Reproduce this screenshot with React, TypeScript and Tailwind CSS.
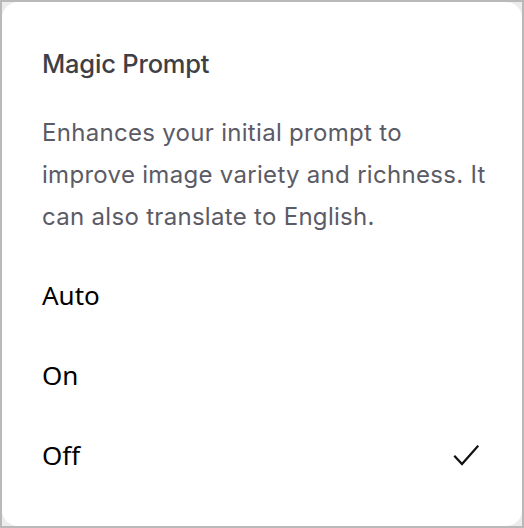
const options = ['Auto', 'On', 'Off'];

const CheckMark = () => (
  <svg width="26" height="23" viewBox="0 0 26 23" fill="none" className="mr-[11px]">
    <polyline points="2,12.5 9,20 24.5,2.5" stroke="#111" strokeWidth="2.2" strokeLinecap="square" strokeLinejoin="miter" />
  </svg>
);

export default function App() {
  const selected = 'Off';
  return (
    <div className="w-[524px] h-[528px] border-2 border-[#b9b9b9] bg-[#ececec]">
      <div className="h-full w-full rounded-[16px] bg-white pl-[40px] pr-[32px] pt-[45px]" style={{ fontFamily: 'Inter, sans-serif' }}>
        <h1 className="text-[25.5px] leading-[34px] font-medium text-[#3f3f46] tracking-[-0.2px]">Magic Prompt</h1>
        <p className="mt-[31px] text-[24px] leading-[42px] text-[#5b5b66] tracking-[0.3px]">
          Enhances your initial prompt to improve image variety and richness. It can also translate to English.
        </p>
        <ul className="mt-[17px]" style={{ fontFamily: '"Noto Sans", sans-serif' }}>
          {options.map((o) => (
            <li key={o} className="flex h-[80px] items-center justify-between text-[26px] text-black">
              <span>{o}</span>
              {o === selected && <CheckMark />}
            </li>
          ))}
        </ul>
      </div>
    </div>
  );
}
